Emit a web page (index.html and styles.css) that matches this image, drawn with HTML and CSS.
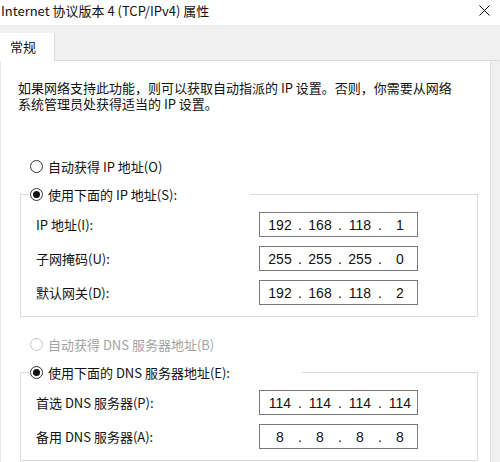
FILE: index.html
```html
<!DOCTYPE html>
<html lang="zh-CN">
<head>
    <meta charset="UTF-8">
    <meta name="viewport" content="width=device-width, initial-scale=1.0">
    <title>Internet 协议版本 4 (TCP/IPv4) 属性</title>
    <link rel="stylesheet" href="styles.css">
</head>
<body>
    <div class="window">
        <header class="titlebar">
            <span class="title">Internet 协议版本 4 (TCP/IPv4) 属性</span>
            <svg class="close" width="11" height="11" viewBox="0 0 11 11">
                <path d="M0.5 0.5 L10.5 10.5 M10.5 0.5 L0.5 10.5" stroke="#000" stroke-width="1" fill="none"/>
            </svg>
        </header>
        <nav class="tabs">
            <span class="tab">常规</span>
        </nav>
        <main class="panel">
            <p class="intro">
                如果网络支持此功能，则可以获取自动指派的 IP 设置。否则，你需要从网络<br>
                系统管理员处获得适当的 IP 设置。
            </p>

            <label class="radio"><span class="circle"></span>自动获得 IP 地址(O)</label>
            <fieldset class="group">
                <legend class="legend-ip">
                    <label class="radio"><span class="circle checked"></span>使用下面的 IP 地址(S):</label>
                </legend>
                <div class="row">
                    <span>IP 地址(I):</span>
                    <div class="ip"><span>192</span><i>.</i><span>168</span><i>.</i><span>118</span><i>.</i><span>1</span></div>
                </div>
                <div class="row">
                    <span>子网掩码(U):</span>
                    <div class="ip"><span>255</span><i>.</i><span>255</span><i>.</i><span>255</span><i>.</i><span>0</span></div>
                </div>
                <div class="row">
                    <span>默认网关(D):</span>
                    <div class="ip"><span>192</span><i>.</i><span>168</span><i>.</i><span>118</span><i>.</i><span>2</span></div>
                </div>
            </fieldset>

            <label class="radio disabled"><span class="circle"></span>自动获得 DNS 服务器地址(B)</label>
            <fieldset class="group">
                <legend class="legend-dns">
                    <label class="radio"><span class="circle checked"></span>使用下面的 DNS 服务器地址(E):</label>
                </legend>
                <div class="row">
                    <span>首选 DNS 服务器(P):</span>
                    <div class="ip"><span>114</span><i>.</i><span>114</span><i>.</i><span>114</span><i>.</i><span>114</span></div>
                </div>
                <div class="row">
                    <span>备用 DNS 服务器(A):</span>
                    <div class="ip"><span>8</span><i>.</i><span>8</span><i>.</i><span>8</span><i>.</i><span>8</span></div>
                </div>
            </fieldset>
        </main>
    </div>
</body>
</html>
```

FILE: styles.css
```css
:root{
    --strip: #f0f0f0;
    --line: #dcdcdc;
    --edge: #7a7a7a;
    --text: #111;
    --muted: #a3a3a3;
}
*,*::before,*::after{
    box-sizing: border-box;
    margin: 0;
    padding: 0;
}
body{
    font-family: "Noto Sans CJK SC", "Noto Sans", sans-serif;
    font-size: 13px;
    color: var(--text);
    background-color: #fff;
}
.window{
    width: 500px;
    height: 462px;
    display: flex;
    flex-direction: column;
    background-color: var(--strip);
    overflow: hidden;
}
.titlebar{
    height: 25px;
    display: flex;
    align-items: center;
    justify-content: space-between;
    padding: 0 10px 4px 1px;
    background-color: #fff;
}
.title{
    font-size: 13px;
    line-height: 16px;
}
.close{
    display: block;
}
.tabs{
    display: flex;
    padding-top: 8px;
    border-bottom: 1px solid var(--line);
}
.tab{
    width: 55px;
    height: 28px;
    margin-bottom: -1px;
    padding-left: 10px;
    line-height: 28px;
    background-color: #fff;
    border-right: 1px solid var(--line);
}
.panel{
    flex: 1;
    margin-right: 9px;
    padding: 19px 12px 0 17px;
    background-color: #fff;
    border-left: 1px solid #e6e6e6;
    border-right: 1px solid var(--line);
}
.intro{
    line-height: 16px;
    margin-bottom: 40px;
}
.radio{
    display: flex;
    align-items: center;
    gap: 5px;
    height: 28px;
    margin-left: 12px;
}
.circle{
    width: 13px;
    height: 13px;
    border: 1px solid #333;
    border-radius: 50%;
    display: flex;
    align-items: center;
    justify-content: center;
    background-color: #fff;
}
.circle.checked::after{
    content: "";
    width: 7px;
    height: 7px;
    border-radius: 50%;
    background-color: #111;
}
.disabled{
    color: var(--muted);
    margin-top: 13px;
}
.disabled .circle{
    border-color: #c4c4c4;
}
.group{
    margin-left: 2px;
    padding: 4px 0 11px 15px;
    border: 1px solid var(--line);
    display: flex;
    flex-direction: column;
    gap: 9px;
}
.group legend{
    margin-left: -7px;
    padding-left: 1px;
}
.group legend .radio{
    margin-left: 0;
}
.legend-ip{
    width: 221px;
}
.legend-dns{
    width: 273px;
}
.row{
    display: grid;
    grid-template-columns: 223px 159px;
    align-items: center;
}
.ip{
    height: 25px;
    display: flex;
    align-items: center;
    padding-left: 5px;
    border: 1px solid var(--edge);
    font-family: "Liberation Sans", Arial, sans-serif;
    font-size: 14px;
    color: #111;
}
.ip span{
    width: 30px;
    text-align: center;
}
.ip i{
    width: 10px;
    font-style: normal;
    text-align: center;
}
```
